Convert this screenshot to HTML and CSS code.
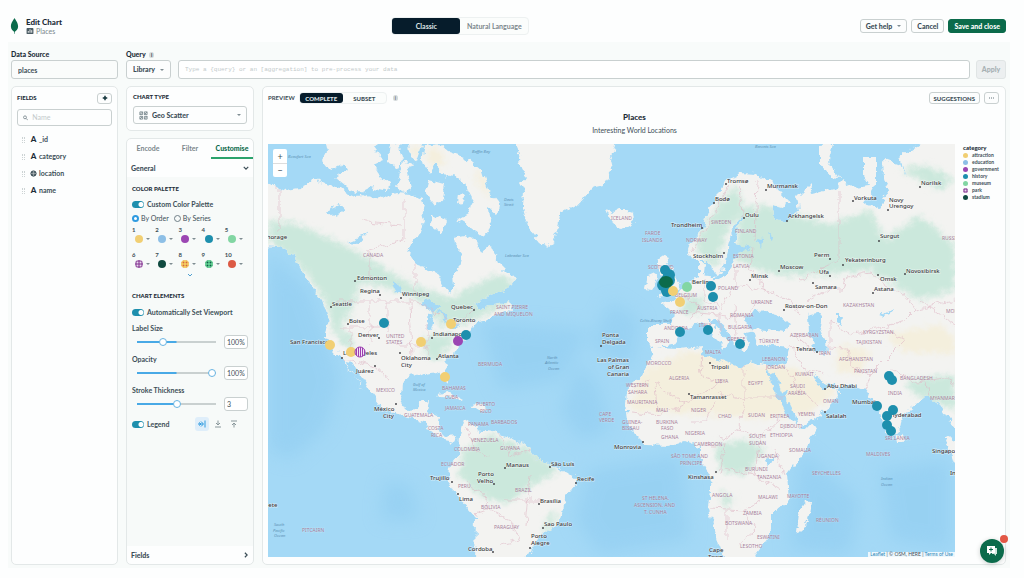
FILE: index.html
```html
<!DOCTYPE html>
<html lang="en">
<head>
  <meta charset="UTF-8">
  <meta name="viewport" content="width=device-width, initial-scale=1.0">
  <title>Edit Chart - Places</title>
  <link rel="stylesheet" href="styles.css">
</head>
<body>
  <header class="topbar">
    <div class="brand">
      <svg class="leaf" viewBox="0 0 10 18"><path d="M5 0C6 2 9 5 9 9.500C9 13 6.500 14.500 5.400 15.500L5.200 18H4.800L4.600 15.500C3.500 14.500 1 13 1 9.500C1 5 4 2 5 0Z" fill="#0b6b4b"/></svg>
      <div>
        <h1>Edit Chart</h1>
        <p class="crumb"><svg viewBox="0 0 8 7"><rect width="8" height="7" rx="1" fill="#4c5d65"/><path d="M2 5.500V3.500M4 5.500V1.500M6 5.500V2.500" stroke="#fff"/></svg>Places</p>
      </div>
    </div>
    <div class="segmented mode">
      <button class="active">Classic</button>
      <button>Natural Language</button>
    </div>
    <div class="actions">
      <button class="btn">Get help <span class="caret"></span></button>
      <button class="btn">Cancel</button>
      <button class="btn primary">Save and close</button>
    </div>
  </header>

  <main class="workspace">
    <!-- Query bar -->
    <div class="query-row">
      <div class="field">
        <label for="source">Data Source</label>
        <input id="source" type="text" value="places">
      </div>
      <div class="field query">
        <label for="query">Query <span class="info">i</span></label>
        <div class="query-controls">
          <button class="btn library">Library <span class="caret"></span></button>
          <input id="query" class="mono" type="text" placeholder="Type a {query} or an [aggregation] to pre-process your data">
          <button class="btn apply" disabled>Apply</button>
        </div>
      </div>
    </div>

    <div class="panels">
      <!-- Fields -->
      <section class="card fields">
        <div class="card-head">
          <h2>FIELDS</h2>
          <button class="add" aria-label="Add field"><svg viewBox="0 0 8 8"><path d="M4 1V7M1 4H7" stroke="#12333a" stroke-width="2"/></svg></button>
        </div>
        <div class="search">
          <svg viewBox="0 0 8 8"><circle cx="3" cy="3" r="2.200" fill="none" stroke="#5c6c75"/><path d="M4.700 4.700L7.500 7.500" stroke="#5c6c75"/></svg>
          <input type="text" placeholder="Name" aria-label="Field name">
        </div>
        <ul class="field-list">
          <li><i class="grip"></i><b>A</b>_id</li>
          <li><i class="grip"></i><b>A</b>category</li>
          <li><i class="grip"></i><svg viewBox="0 0 8 8"><circle cx="4" cy="4" r="3" fill="#5c6c75" stroke="#2c4149"/><path d="M1 4H7M4 1V7" stroke="#c1c7c6" stroke-width=".6"/></svg>location</li>
          <li><i class="grip"></i><b>A</b>name</li>
        </ul>
      </section>

      <div class="settings">
        <section class="card chart-type">
          <label for="type"><h2>CHART TYPE</h2></label>
          <div class="select">
            <svg viewBox="0 0 10 10"><path d="M1 1H4V4H1ZM6 1H9V4H6ZM1 6H4V9H1ZM6 6H9V9H6ZM1 4L4 1M6 4L9 1M1 9L4 6M6 9L9 6" fill="none" stroke="#7b8a90"/></svg>
            <select id="type"><option>Geo Scatter</option></select>
            <span class="caret"></span>
          </div>
        </section>

        <section class="card customize">
          <nav class="tabs">
            <button>Encode</button>
            <button>Filter</button>
            <button class="active">Customise</button>
          </nav>
          <button class="accordion">General <svg viewBox="0 0 8 8"><path d="M1 2.500L4 5.500L7 2.500" fill="none" stroke="#3d4f58" stroke-width="1.600"/></svg></button>
          <div class="options">
            <h2>COLOR PALETTE</h2>
            <label class="toggle"><input type="checkbox" checked>Custom Color Palette</label>
            <div class="radios">
              <label><input type="radio" name="by" checked>By Order</label>
              <label><input type="radio" name="by">By Series</label>
            </div>
            <div class="palette">
              <button>1<span><i class="yellow"></i><em class="caret"></em></span></button>
              <button>2<span><i class="blue"></i><em class="caret"></em></span></button>
              <button>3<span><i class="purple"></i><em class="caret"></em></span></button>
              <button>4<span><i class="teal"></i><em class="caret"></em></span></button>
              <button>5<span><i class="mint"></i><em class="caret"></em></span></button>
              <button>6<span><i class="dots-purple"></i><em class="caret"></em></span></button>
              <button>7<span><i class="forest"></i><em class="caret"></em></span></button>
              <button>8<span><i class="dots-yellow"></i><em class="caret"></em></span></button>
              <button>9<span><i class="dots-green"></i><em class="caret"></em></span></button>
              <button>10<span><i class="red"></i><em class="caret"></em></span></button>
            </div>
            <button class="more" aria-label="More colors"><svg viewBox="0 0 6 4"><path d="M1 1L3 3L5 1" fill="none" stroke="#4f9fd0"/></svg></button>

            <h2>CHART ELEMENTS</h2>
            <label class="toggle viewport"><input type="checkbox" checked>Automatically Set Viewport</label>
            <div class="range">
              <label for="size">Label Size</label>
              <input id="size" class="third" type="range" value="31">
              <input type="text" value="100%" aria-label="Label size value">
            </div>
            <div class="range">
              <label for="opacity">Opacity</label>
              <input id="opacity" class="full" type="range" value="100">
              <input type="text" value="100%" aria-label="Opacity value">
            </div>
            <div class="range">
              <label for="stroke">Stroke Thickness</label>
              <input id="stroke" class="half" type="range" value="50">
              <input type="text" value="3" aria-label="Stroke value">
            </div>
            <div class="legend-row">
              <label class="toggle"><input type="checkbox" checked>Legend</label>
              <button class="active" aria-label="Right"><svg viewBox="0 0 8 8"><path d="M0 4H5M3 1.500L5.500 4L3 6.500M7 0.500V7.500M1 2.500L3 4L1 5.500" fill="none" stroke="#2f9be0"/></svg></button>
              <button aria-label="Bottom"><svg viewBox="0 0 8 8"><path d="M4 0.500V5M2 3L4 5L6 3M1 7H7" fill="none" stroke="#89979b"/></svg></button>
              <button aria-label="Top"><svg viewBox="0 0 8 8"><path d="M4 7.500V3M2 5L4 3L6 5M1 1H7" fill="none" stroke="#89979b"/></svg></button>
            </div>
          </div>
          <button class="accordion">Fields <svg viewBox="0 0 8 8"><path d="M2.500 1L5.500 4L2.500 7" fill="none" stroke="#3d4f58" stroke-width="1.600"/></svg></button>
        </section>
      </div>

      <!-- Chart preview -->
      <section class="card preview">
        <div class="preview-head">
          <h2>PREVIEW</h2>
          <div class="segmented">
            <button class="active">COMPLETE</button>
            <button>SUBSET</button>
          </div>
          <span class="info">i</span>
          <button class="btn suggestions">SUGGESTIONS</button>
          <button class="btn dots" aria-label="More"><svg viewBox="0 0 8 2"><path d="M1 1h0M4 1h0M7 1h0" stroke="#3d4f58" stroke-width="1.600" stroke-linecap="round"/></svg></button>
        </div>
        <h3>Places</h3>
        <p class="subtitle">Interesting World Locations</p>
        <div class="chart">
          <div class="map">
            <svg viewBox="268 144 687 413" preserveAspectRatio="xMidYMid slice">
              <defs>
                <filter id="coast" x="0" y="0" width="1" height="1">
                  <feTurbulence type="fractalNoise" baseFrequency="0.13" numOctaves="3" seed="4"/>
                  <feDisplacementMap in="SourceGraphic" scale="9" xChannelSelector="R" yChannelSelector="G"/>
                </filter>
                <filter id="soft"><feGaussianBlur stdDeviation="3"/></filter>
                <filter id="deep-soft"><feGaussianBlur stdDeviation="9"/></filter>
                <pattern id="stripes" x="354" width="2" height="4" patternUnits="userSpaceOnUse"><rect width="2" height="4" fill="#f3e2f6"/><rect width="1" height="4" fill="#9b3fb0"/></pattern>
                <clipPath id="land">
                  <path id="namerica" d="M258 182L268 183L284 189L300 187L315 180L325 185L340 188L345 192L358 198L366 194L380 198L395 193L410 194L422 199L426 210L420 215L424 222L420 232L411 243L409 254L416 265L430 270L440 276L446 287L450 292L454 286L453 274L460 266L463 255L455 245L454 236L464 234L475 240L482 252L491 246L498 262L508 272L515 277L512 286L496 294L482 299L475 304L480 310L492 305L507 303L512 309L502 313L488 320L478 322L470 334L461 343L455 352L444 362L450 380L448 384L443 375L438 371L428 372L420 374L411 376L402 384L401 400L407 411L418 410L423 401L429 399L427 411L440 417L438 428L447 437L458 436L455 442L444 440L431 432L424 422L410 417L394 413L381 406L372 394L363 380L352 363L346 362L354 376L366 391L361 386L345 363L334 351L325 337L328 317L322 300L309 284L303 272L294 256L280 247L258 246Z"/>
                  <path id="arctic" d="M324 140L380 140L374 148L383 160L374 164L381 176L391 185L383 191L370 188L358 194L346 186L336 178L348 170L344 163L330 170L322 161L327 152ZM390 143L398 141L403 160L398 168L388 162ZM404 160L412 163L407 170L412 188L403 193L397 184ZM409 140L423 143L417 162L410 157ZM424 146L440 144L449 152L466 158L482 171L488 190L500 205L498 214L488 207L490 225L483 236L470 226L458 219L468 213L472 198L463 181L454 174L447 177L436 165L430 174L421 160ZM430 180L445 184L443 199L434 205L426 194ZM458 195L465 196L462 204L457 202ZM432 215L447 221L441 233L431 225Z"/>
                  <path id="greenland" d="M516 140L522 168L526 176L520 184L524 191L523 208L528 228L540 242L550 248L558 228L560 214L577 205L590 190L603 187L612 173L609 160L614 150L616 140Z"/>
                  <path id="iceland" d="M606 209L612 213L618 210L625 210L634 213L635 220L629 225L619 228L611 221Z"/>
                  <path id="britain" d="M658 260L664 256L669 258L665 264L673 268L674 277L679 284L678 291L668 295L658 297L664 290L658 286L663 277L658 271ZM648 277L655 274L658 282L652 290L645 289Z"/>
                  <path id="samerica" d="M464 419L474 425L478 430L498 433L510 438L523 444L530 450L538 460L556 466L577 478L577 483L566 496L564 513L555 526L545 532L534 545L526 560L475 560L476 518L460 500L448 480L449 467L459 454L460 434Z"/>
                  <path id="islands" d="M437 394L448 392L463 400L462 402L452 398L439 397ZM470 405L481 404L488 408L478 410ZM490 305L511 301L513 312L500 310ZM807 501L811 503L808 520L802 533L796 531L798 514ZM897 436L902 433L903 442L898 442ZM820 144L833 143L829 161L839 178L832 177L820 163ZM945 436L956 441L962 470L954 463ZM698 318L702 319L702 332L697 331Z"/>
                  <path id="eurasia" d="M653 347L648 344L648 325L672 325L674 313L661 304L674 301L680 290L690 284L699 276L699 262L704 262L703 275L717 277L708 261L693 261L687 254L691 242L704 227L711 206L726 181L742 173L756 174L775 185L788 200L785 208L771 204L776 220L784 222L800 211L798 197L810 185L812 194L835 188L842 181L853 188L870 186L864 176L864 157L876 157L876 185L865 204L877 208L889 194L884 178L883 158L900 164L907 178L899 158L925 140L965 140L965 434L951 424L941 407L935 399L925 397L915 405L902 415L900 430L893 438L886 430L880 409L866 390L855 386L837 386L839 395L820 416L799 428L812 427L817 429L804 452L786 475L788 500L773 514L773 530L760 548L751 560L724 560L715 530L708 505L712 478L700 462L700 447L685 441L668 446L646 445L629 428L626 405L627 388L642 375L652 356Z"/>
                </clipPath>
              </defs>
              <rect class="sea" x="258" y="134" width="710" height="435"/>
              <!-- Deeper water -->
              <g class="deep" filter="url(#deep-soft)">
                <path d="M268 250L310 290L340 380L325 430L290 460L268 450ZM610 300L640 320L630 370L590 345ZM480 320L590 330L560 380L500 390ZM580 360L600 390L610 430L580 440L560 410ZM590 470L680 455L690 540L600 555L575 520ZM800 450L860 500L850 555L790 550ZM385 480L410 485L420 520L380 520ZM880 470L950 460L950 550L890 540Z"/>
              </g>
              <g filter="url(#coast)">
                <g class="land">
                  <use href="#namerica"/><use href="#arctic"/><use href="#greenland"/><use href="#iceland"/>
                  <use href="#britain"/><use href="#samerica"/><use href="#islands"/><use href="#eurasia"/>
                </g>
                <g clip-path="url(#land)">
                  <g class="forest-area" filter="url(#soft)">
                    <path d="M268 220L300 225L350 248L385 268L412 285L450 298L495 275L512 280L512 300L470 322L440 325L430 305L395 290L360 282L352 310L335 335L325 300L300 265L268 240ZM425 335L455 335L440 360L425 357ZM334 325L350 335L355 350L342 345Z"/>
                    <path d="M463 450L490 435L525 447L560 470L530 487L505 505L480 495L458 475ZM545 520L560 510L545 540ZM695 245L715 210L735 185L745 205L725 235L718 265L705 262ZM740 210L765 205L830 225L870 210L885 240L920 215L955 245L955 290L920 300L870 270L820 275L775 275L735 260ZM715 445L750 440L765 450L745 475L720 470ZM905 380L955 375L955 410L915 395ZM680 300L700 295L705 310L685 315ZM720 490L735 500L725 510ZM900 170L925 165L955 180L940 190Z"/>
                  </g>
                  <g class="desert" filter="url(#soft)">
                    <path d="M640 372L690 350L760 365L790 368L808 412L760 418L630 410ZM780 362L810 375L838 392L802 418ZM840 345L870 350L860 375L835 370ZM885 335L940 325L955 338L955 355L905 352Z"/>
                    <path d="M409 146L423 146L416 160ZM425 150L440 148L445 165L432 170ZM475 168L485 178L492 200L478 185Z"/>
                  </g>
                  <!-- Enclosed seas and lakes -->
                  <g class="sea">
                    <path d="M657 348L672 345L677 338L684 329L693 326L703 322L714 338L724 348L728 341L718 330L709 319L716 318L728 331L735 344L745 352L749 343L744 332L752 330L757 344L772 346L790 348L788 364L776 367L757 362L738 367L719 359L701 355L702 346L680 349Z"/>
                    <path d="M746 315L755 312L770 311L790 324L784 332L768 330L747 329ZM808 315L821 312L819 326L825 340L826 354L814 350L809 332ZM767 370L775 374L792 408L797 427L786 414L773 389ZM813 374L822 382L834 384L835 389L820 389Z"/>
                    <path d="M714 280L723 268L725 256L730 238L738 220L742 214L737 231L734 243L752 247L736 255L730 270L720 280Z"/>
                    <path d="M325 210L340 204L345 210L334 218ZM347 242L362 236L368 232L359 243ZM420 303L430 300L442 307L433 312ZM429 314L435 312L431 330L427 328ZM438 310L449 315L447 325ZM447 328L460 323L452 329ZM392 282L400 285L403 295L396 290ZM837 314L843 314L842 325L837 322ZM765 460L772 457L768 467ZM878 316L895 309L894 312L881 317ZM757 238L763 239L761 247ZM768 232L773 236L772 242Z"/>
                  </g>
                  <g class="borders">
                    <path d="M279 180V230M333 301H416L430 308L455 325L475 308M336 361L352 360L372 365L390 380M388 301V330M410 301L412 360M370 302V345M340 327H385M350 327V350M395 345H430M427 325V362M404 200V240L370 250V280M415 260V295M360 220L400 225"/>
                    <path d="M468 430L475 450L490 458M500 434L510 455L530 450M465 480L485 495L490 510L475 515M490 510L510 520L520 540L500 545M505 500L545 500M530 475L525 525M650 380L630 390M655 383L685 404L720 383L700 375L702 355M744 365V400L716 392M685 404L660 415L630 412M655 385L657 410M690 422L705 422L715 400M744 400L738 430L720 440M744 397H785M738 430L760 438L780 420M760 438L755 475L725 468M705 445H725L720 475M710 508L745 510L760 500M727 510V540M745 510L755 530L738 545M775 450L785 475M755 475L780 490M673 325L690 330M681 296L700 305L690 320M703 279V300L720 305M735 268L735 285L720 308M735 285L765 290L790 300L800 315M752 247L750 270L770 295M690 253L705 230L730 185M740 185L742 215M757 180L755 240M690 312L745 318L758 300M720 312V335M735 305L737 335"/>
                    <path d="M808 300L828 290L843 290L846 278L870 273L885 285L905 295L915 310L905 320L880 328L850 335L830 320L830 345M915 310L955 300M880 328L905 340L870 375L850 365L848 348L826 347M795 335L815 352M790 345L805 370L825 375M870 375L865 390M890 370L915 382L945 378L955 385M785 365L800 390L820 408M925 380L930 400M920 300L955 325M839 190V260L800 280"/>
                  </g>
                </g>
              </g>

              <g class="countries">
                <text x="363" y="257">CANADA</text><text x="386" y="338">UNITED</text><text x="386" y="344">STATES</text>
                <text x="376" y="392">MEXICO</text><text x="404" y="417">GUATEMALA</text><text x="428" y="430">COSTA</text><text x="431" y="437">RICA</text>
                <text x="442" y="390">BAHAMAS</text><text x="445" y="399">CUBA</text><text x="445" y="410">JAMAICA</text><text x="476" y="406">PUERTO</text><text x="480" y="413">RICO</text>
                <text x="468" y="426">PANAMA</text><text x="491" y="424">BARBADOS</text><text x="471" y="442">VENEZUELA</text><text x="454" y="451">COLOMBIA</text><text x="500" y="450">GUYANA</text><text x="441" y="466">ECUADOR</text>
                <text x="458" y="488">PERU</text><text x="481" y="509">BOLIVIA</text><text x="494" y="529">PARAGUAY</text><text x="515" y="492">BRAZIL</text><text x="302" y="532">PITCAIRN</text>
                <text x="478" y="366">BERMUDA</text><text x="496" y="309">SAINT PIERRE</text><text x="494" y="316">AND MIQUELON</text>
                <text x="611" y="220">ICELAND</text><text x="645" y="235">FAROE</text><text x="642" y="242">ISLANDS</text><text x="648" y="269">SCOTLAND</text>
                <text x="711" y="224">SWEDEN</text><text x="686" y="242">NORWAY</text><text x="735" y="233">FINLAND</text><text x="733" y="258">ESTONIA</text><text x="733" y="268">LATVIA</text><text x="718" y="290">POLAND</text>
                <text x="675" y="297">BELGIUM</text><text x="670" y="314">FRANCE</text><text x="697" y="310">AUSTRIA</text><text x="730" y="317">ROMANIA</text><text x="728" y="329">BULGARIA</text><text x="664" y="330">ANDORRA</text><text x="655" y="343">SPAIN</text><text x="699" y="327">ITALY</text><text x="727" y="341">GREECE</text>
                <text x="751" y="304">UKRAINE</text><text x="759" y="343">TÜRKIYE</text><text x="790" y="337">AZERBAIJAN</text><text x="843" y="307">KAZAKHSTAN</text><text x="863" y="334">KYRGYZSTAN</text><text x="856" y="344">TAJIKISTAN</text><text x="942" y="240">RUSSIA</text><text x="946" y="313">MONGOLIA</text>
                <text x="705" y="354">MALTA</text><text x="646" y="365">MOROCCO</text><text x="669" y="380">ALGERIA</text><text x="715" y="383">LIBYA</text><text x="748" y="385">EGYPT</text><text x="626" y="387">WESTERN</text><text x="628" y="394">SAHARA</text><text x="627" y="404">MAURITANIA</text><text x="656" y="412">MALI</text><text x="691" y="412">NIGER</text><text x="718" y="418">CHAD</text><text x="748" y="417">SUDAN</text>
                <text x="599" y="416">CAPE</text><text x="599" y="422">VERDE</text><text x="622" y="424">GUINEA-</text><text x="622" y="430">BISSAU</text><text x="656" y="424">BURKINA</text><text x="661" y="430">FASO</text><text x="661" y="439">GHANA</text><text x="685" y="435">NIGERIA</text><text x="694" y="446">CAMEROON</text><text x="749" y="438">SOUTH</text><text x="749" y="445">SUDAN</text>
                <text x="671" y="458">SÃO TOMÉ AND</text><text x="680" y="465">PRÍNCIPE</text><text x="712" y="497">ANGOLA</text><text x="725" y="525">BOTSWANA</text><text x="740" y="548">LESOTHO</text><text x="743" y="515">ZAMBIA</text><text x="745" y="471">BURUNDI</text>
                <text x="642" y="500">ST HELENA,</text><text x="634" y="507">ASCENSION, AND</text><text x="644" y="514">T. CUNHA</text>
                <text x="762" y="361">LEBANON</text><text x="766" y="369">JORDAN</text><text x="819" y="355">IRAN</text><text x="839" y="361">AFGHANISTAN</text><text x="854" y="373">PAKISTAN</text><text x="795" y="376">KUWAIT</text><text x="790" y="388">SAUDI</text><text x="788" y="395">ARABIA</text><text x="823" y="403">OMAN</text><text x="798" y="416">YEMEN</text><text x="770" y="418">ERITREA</text><text x="780" y="428">DJIBOUTI</text><text x="770" y="437">ETHIOPIA</text><text x="789" y="452">SOMALIA</text><text x="757" y="458">UGANDA</text><text x="757" y="479">TANZANIA</text><text x="758" y="499">MALAWI</text><text x="787" y="498">MAYOTTE</text><text x="757" y="539">ESWATINI</text>
                <text x="900" y="380">BANGLADESH</text><text x="888" y="395">INDIA</text><text x="930" y="400">MYANMAR</text><text x="885" y="440">SRI LANKA</text><text x="866" y="456">MALDIVES</text><text x="812" y="475">SEYCHELLES</text><text x="816" y="522">RÉUNION</text>
              </g>
              <g class="waters">
                <text x="472" y="153">Baffin Bay</text><text x="288" y="158">Beaufort Sea</text><text x="504" y="201">Davis</text><text x="504" y="206">Strait</text><text x="505" y="257">Labrador Sea</text><text x="755" y="148">Barents Sea</text><text x="640" y="322">Celtic-Biscay Shelf</text>
                <text x="413" y="386">Gulf of</text><text x="413" y="391">Mexico</text><text x="547" y="359">North</text><text x="545" y="364">Atlantic</text><text x="548" y="370">Ocean</text><text x="274" y="526">South</text><text x="273" y="532">Pacific</text><text x="274" y="537">Ocean</text><text x="881" y="480">Indian</text><text x="881" y="486">Ocean</text>
              </g>
              <g class="cities">
                <text x="256" y="239">Anchorage</text><text x="357" y="280">Edmonton</text><text x="360" y="293">Regina</text><text x="402" y="296">Winnipeg</text><text x="332" y="306">Seattle</text><text x="349" y="323">Boise</text><text x="358" y="337">Denver</text><text x="290" y="344">San Francisco</text><text x="451" y="309">Quebec</text><text x="453" y="322">Toronto</text><text x="433" y="336">Indianapolis</text><text x="343" y="355">Los Angeles</text>
                <text x="401" y="360">Oklahoma</text><text x="401" y="367">City</text><text x="438" y="358">Atlanta</text><text x="356" y="373">Juárez</text><text x="374" y="411">México</text><text x="383" y="418">City</text><text x="430" y="480">Trujillo</text><text x="459" y="501">Lima</text><text x="478" y="476">Porto</text><text x="477" y="483">Velho</text><text x="506" y="467">Manaus</text><text x="551" y="466">São Luís</text><text x="577" y="481">Recife</text><text x="540" y="503">Brasília</text><text x="544" y="526">Sao Paulo</text><text x="531" y="538">Porto</text><text x="531" y="545">Alegre</text><text x="468" y="551">Cordoba</text><text x="254" y="507">Papeete</text>
                <text x="602" y="337">Ponta</text><text x="602" y="344">Delgada</text><text x="597" y="362">Las Palmas</text><text x="608" y="369">of Gran</text><text x="607" y="376">Canaria</text><text x="671" y="227">Trondheim</text><text x="693" y="258">Stockholm</text><text x="727" y="183">Tromsø</text><text x="715" y="201">Bodø</text><text x="745" y="217">Oulu</text><text x="692" y="284">Berlin</text><text x="751" y="278">Minsk</text><text x="780" y="269">Moscow</text><text x="767" y="188">Murmansk</text><text x="788" y="218">Arkhangelsk</text><text x="854" y="200">Vorkuta</text><text x="889" y="202">Novy</text><text x="889" y="208">Urengoy</text><text x="921" y="185">Norilsk</text><text x="880" y="238">Surgut</text><text x="814" y="257">Perm</text><text x="845" y="262">Yekaterinburg</text><text x="819" y="274">Ufa</text><text x="815" y="289">Samara</text><text x="880" y="281">Omsk</text><text x="906" y="273">Novosibirsk</text><text x="874" y="291">Astana</text><text x="785" y="308">Rostov-on-Don</text><text x="796" y="351">Tehran</text>
                <text x="711" y="369">Tripoli</text><text x="690" y="399">Tamanrasset</text><text x="614" y="449">Monrovia</text><text x="688" y="479">Kinshasa</text><text x="709" y="552">Cape</text><text x="708" y="559">Town</text><text x="827" y="388">Abu Dhabi</text><text x="826" y="418">Salalah</text><text x="852" y="404">Mumbai</text><text x="890" y="417">Hyderabad</text><text x="932" y="453">Singapore</text><text x="950" y="475">Indonesia</text>
              </g>
              <path class="city-dots" d="M355 281h0M380 295h0M401 298h0M331 307h0M348 324h0M379 338h0M432 338h0M474 310h0M400 353h0M437 359h0M342 358h0M375 366h0M396 404h0M452 482h0M458 494h0M505 468h0M550 467h0M576 483h0M539 504h0M543 528h0M530 548h0M493 552h0M494 484h0M601 346h0M702 228h0M724 253h0M726 184h0M714 203h0M744 218h0M750 280h0M779 271h0M766 190h0M787 221h0M853 201h0M888 210h0M920 187h0M879 241h0M830 259h0M843 265h0M830 276h0M813 283h0M878 275h0M905 274h0M873 293h0M784 310h0M817 352h0M710 363h0M689 394h0M643 442h0M716 472h0M825 389h0M825 412h0"/>

              <!-- Data points -->
              <g class="points">
                <g class="history">
                  <circle cx="384" cy="323" r="5"/><circle cx="466" cy="335" r="5"/><circle cx="665" cy="270" r="5"/><circle cx="669" cy="275" r="6"/><circle cx="668" cy="280" r="7"/><circle cx="663" cy="285" r="6"/><circle cx="667" cy="291" r="6"/><circle cx="711" cy="286" r="5"/><circle cx="713" cy="297" r="5"/><circle cx="680" cy="332" r="5"/><circle cx="708" cy="330" r="5"/><circle cx="740" cy="344" r="5"/><circle cx="889" cy="376" r="5"/><circle cx="892" cy="380" r="5"/><circle cx="877" cy="406" r="5"/><circle cx="893" cy="410" r="5"/><circle cx="887" cy="416" r="5"/><circle cx="887" cy="425" r="5"/><circle cx="891" cy="431" r="5"/>
                </g>
                <g class="attraction">
                  <circle cx="330" cy="345" r="5"/><circle cx="351" cy="352" r="5"/><circle cx="421" cy="342" r="5"/><circle cx="451" cy="324" r="5"/><circle cx="445" cy="377" r="5"/><circle cx="673" cy="291" r="5"/><circle cx="680" cy="302" r="5"/>
                </g>
                <circle class="government" cx="458" cy="341" r="5"/>
                <circle class="park" cx="360" cy="352" r="5" fill="url(#stripes)"/>
                <circle class="museum" cx="687" cy="287" r="5"/>
                <ellipse class="stadium" cx="666" cy="282" rx="7" ry="6"/>
              </g>
            </svg>
            <div class="zoom">
              <button aria-label="Zoom in">+</button>
              <button aria-label="Zoom out">−</button>
            </div>
            <p class="credit"><a href="#">Leaflet</a> | © OSM, HERE | <a href="#">Terms of Use</a></p>
          </div>
          <div class="legend">
            <b>category</b>
            <ul>
              <li><i class="yellow"></i>attraction</li>
              <li><i class="blue"></i>education</li>
              <li><i class="purple"></i>government</li>
              <li><i class="teal"></i>history</li>
              <li><i class="mint"></i>museum</li>
              <li><i class="dots-purple"></i>park</li>
              <li><i class="forest"></i>stadium</li>
            </ul>
          </div>
        </div>
      </section>
    </div>
  </main>

  <button class="chat" aria-label="Chat">
    <svg viewBox="0 0 12 12"><path d="M1 1H9V8H5L3 10V8H1Z" fill="#fff"/><path d="M9 3H11V9H10V11L8 9H6V8H9Z" fill="#cfe5dc"/><path d="M3 4.500H7M5 2.500V6.500" stroke="#0b6b4b"/></svg>
    <span class="badge"></span>
  </button>
</body>
</html>
```
FILE: styles.css
```css
:root {
  --ink: #1c2d38;
  --text: #3d4f58;
  --muted: #7b878c;
  --line: #e3e8e8;
  --input-line: #c9d0d0;
  --bg: #f8fbfa;
  --green: #0b6b4b;
  --teal: #1e8fad;
  --navy: #061c2b;
}

* {
  margin: 0;
  padding: 0;
  box-sizing: border-box;
}

body {
  min-height: 100vh;
  display: flex;
  flex-direction: column;
  font-family: Lato, "Noto Sans", sans-serif;
  font-size: 7px;
  line-height: 9px;
  color: var(--text);
  background: #fdfefe;
}

button,
input,
select {
  font: inherit;
  color: inherit;
  min-width: 0;
}

button {
  background: none;
  border: none;
  white-space: nowrap;
}

svg {
  display: block;
}

ul {
  list-style: none;
}

h1 {
  font-size: 8px;
  line-height: 10px;
  font-weight: 900;
  color: var(--ink);
}

h2 {
  font-size: 6px;
  line-height: 8px;
  font-weight: 900;
  color: var(--ink);
}

/* Top bar */
.topbar {
  display: grid;
  grid-template-columns: 4fr auto 5fr;
  align-items: center;
  height: 42px;
  padding: 10px 18px 0 10px;
}

.brand {
  display: flex;
  align-items: center;
  gap: 7px;
}

.leaf {
  width: 9px;
  height: 18px;
}

.crumb {
  display: flex;
  align-items: center;
  gap: 2px;
  color: var(--muted);
}

.crumb svg {
  width: 8px;
  height: 6px;
}

.segmented {
  display: flex;
  border: 1px solid #edf1f1;
  border-radius: 4px;
  background: #fbfdfc;
}

.segmented button {
  border-radius: 3px;
}

.segmented .active {
  background: var(--navy);
  color: #dfe6e8;
}

.mode {
  font-weight: 700;
  color: var(--muted);
}

.mode button {
  width: 68px;
  height: 16px;
}

.actions {
  display: flex;
  justify-content: flex-end;
  gap: 4px;
}

.btn {
  display: inline-flex;
  align-items: center;
  justify-content: center;
  gap: 5px;
  height: 14px;
  padding: 0 5px;
  border: 1px solid var(--input-line);
  border-radius: 3px;
  background: #fcfdfd;
  color: var(--text);
  font-weight: 900;
}

.primary {
  background: var(--green);
  border-color: var(--green);
  color: #fff;
}

.caret {
  display: inline-block;
  border: 2px solid transparent;
  border-top-color: #7f8c92;
  border-bottom: 0;
}

/* Workspace */
.workspace {
  flex: 1;
  display: flex;
  flex-direction: column;
  gap: 7px;
  margin: 0 14px 10px 8px;
  padding: 8px 4px 3px 3px;
  background: var(--bg);
}

.query-row {
  display: grid;
  grid-template-columns: 107px 1fr;
  gap: 8px;
}

.field label {
  display: block;
  height: 10px;
  font-weight: 900;
  color: var(--ink);
}

.field input {
  height: 19px;
  padding: 0 6px;
  border: 1px solid var(--input-line);
  border-radius: 3px;
  background: #fff;
}

#source {
  width: 100%;
  background: #fafcfb;
  font-weight: 700;
}

.query-controls {
  display: flex;
  gap: 6px;
}

.query-controls .btn {
  height: 19px;
}

.query-controls .library {
  width: 45px;
  margin-right: 1px;
}

.query-controls input {
  flex: 1;
}

.field .mono {
  font-family: "Liberation Mono", monospace;
  font-size: 6px;
}

::placeholder {
  color: #c3cacb;
  opacity: 1;
}

.query-controls .apply {
  width: 30px;
  background: #eceff0;
  border-color: #e0e5e5;
  color: #a6b0b3;
}

.info {
  display: inline-block;
  width: 5px;
  margin-left: 2px;
  border-radius: 3px;
  background: #d3d9da;
  color: var(--text);
  font-size: 5px;
  line-height: 6px;
  text-align: center;
}

.panels {
  flex: 1;
  display: grid;
  grid-template-columns: 107px 128px 1fr;
  gap: 8px;
}

.card {
  border: 1px solid var(--line);
  border-radius: 5px;
  background: #fdfefe;
}

/* Fields panel */
.fields {
  padding: 5px;
}

.card-head {
  display: flex;
  align-items: center;
  justify-content: space-between;
  height: 12px;
}

.add {
  display: grid;
  place-items: center;
  width: 15px;
  height: 11px;
  border: 1px solid var(--input-line);
  border-radius: 3px;
}

.add svg {
  width: 6px;
  height: 6px;
}

.search {
  display: flex;
  align-items: center;
  gap: 4px;
  height: 17px;
  margin-top: 5px;
  padding: 0 5px;
  border: 1px solid var(--input-line);
  border-radius: 3px;
}

.search svg {
  width: 6px;
  height: 6px;
}

.search input {
  width: 100%;
  border: none;
  background: none;
}

.field-list {
  padding: 5px;
}

.field-list li {
  display: flex;
  align-items: center;
  gap: 2px;
  height: 17px;
  font-weight: 700;
}

.field-list b {
  width: 7px;
  font-size: 8px;
  font-weight: 900;
  text-align: center;
  color: var(--ink);
}

.field-list svg {
  width: 7px;
  height: 7px;
}

.grip {
  width: 3px;
  height: 6px;
  margin-right: 3px;
  border: dotted #ccd3d4;
  border-width: 0 1px;
}

/* Settings column */
.settings {
  display: flex;
  flex-direction: column;
  gap: 7px;
}

.chart-type {
  height: 45px;
  padding: 6px;
}

.select {
  position: relative;
  display: flex;
  align-items: center;
  gap: 4px;
  height: 18px;
  margin-top: 5px;
  padding: 0 5px;
  border: 1px solid var(--input-line);
  border-radius: 3px;
}

.select svg {
  width: 9px;
  height: 9px;
}

.select select {
  flex: 1;
  appearance: none;
  border: none;
  background: none;
  font-size: 7px;
  font-weight: 900;
}

.customize {
  flex: 1;
  display: flex;
  flex-direction: column;
  overflow: hidden;
}

.tabs {
  display: grid;
  grid-template-columns: repeat(3, 1fr);
  height: 20px;
}

.tabs button {
  border-bottom: 2px solid transparent;
  font-weight: 700;
  color: var(--muted);
}

.tabs .active {
  border-color: #2ba36c;
  color: var(--green);
  font-weight: 900;
}

.accordion {
  display: flex;
  align-items: center;
  justify-content: space-between;
  height: 18px;
  padding: 0 4px;
  font-weight: 900;
}

.accordion svg {
  width: 6px;
  height: 6px;
}

.options {
  flex: 1;
  padding: 8px 5px;
  background: #f7faf9;
}

.toggle {
  display: flex;
  align-items: center;
  gap: 3px;
  margin-top: 7px;
  font-weight: 700;
}

.toggle input {
  appearance: none;
  width: 12px;
  height: 7px;
  border-radius: 4px;
  background: radial-gradient(circle at 9px 50%, #fff 2px, var(--teal) 3px);
}

.radios {
  display: flex;
  gap: 5px;
  margin: 5px 0 3px;
}

.radios label {
  display: flex;
  align-items: center;
  gap: 2px;
}

.radios input {
  appearance: none;
  width: 7px;
  height: 7px;
  border: 1px solid #6f7f87;
  border-radius: 50%;
}

.radios input:checked {
  border: 2px solid #2f9be0;
  background: #fff;
}

.palette {
  display: grid;
  grid-template-columns: repeat(5, 1fr);
  gap: 8px 0;
}

.palette button {
  font-size: 6px;
  line-height: 8px;
  font-weight: 700;
  text-align: left;
}

.palette span {
  display: flex;
  align-items: center;
  gap: 3px;
  padding: 1px 0 0 3px;
}

.palette i {
  width: 8px;
  height: 8px;
  border-radius: 50%;
}

.yellow { background: #f1cf73; }
.blue { background: #8dbfe6; }
.purple { background: #9b46b3; }
.teal { background: var(--teal); }
.mint { background: #82d6a3; }
.forest { background: #104a40; }
.red { background: #dc5a45; }
.dots-purple { background: radial-gradient(#e9d8ee 20%, #9a5ba6 60%) 1px 1px / 3px 3px; }
.dots-yellow { background: radial-gradient(#d8653e 20%, #f3cb62 60%) 1px 1px / 3px 3px; }
.dots-green { background: radial-gradient(#125949 20%, #60cf91 60%) 1px 1px / 3px 3px; }

.more {
  display: block;
  margin: 5px auto 15px;
}

.more svg {
  width: 6px;
  height: 4px;
}

.viewport {
  margin: 8px 0 7px;
}

.range {
  display: grid;
  grid-template-columns: 1fr 24px;
  align-items: center;
  column-gap: 8px;
  margin-bottom: 5px;
  padding-left: 5px;
}

.range label {
  grid-column: 1 / -1;
  margin-left: -5px;
  font-weight: 700;
}

.range input[type="text"] {
  width: 100%;
  height: 14px;
  margin: 2px 0 1px;
  padding: 0 2px;
  border: 1px solid var(--input-line);
  border-radius: 3px;
  background: #fff;
}

.range input[type="range"] {
  appearance: none;
  width: 100%;
  height: 10px;
  background: linear-gradient(#48a9e6, #48a9e6) no-repeat 0 50% / 50% 2px, linear-gradient(#c9d0d0, #c9d0d0) no-repeat 0 50% / 100% 2px;
}

.range .third {
  background-size: 31% 2px, 100% 2px;
}

.range .full {
  background-size: 100% 2px;
}

.range input::-webkit-slider-thumb {
  appearance: none;
  width: 8px;
  height: 8px;
  border: 1px solid #69b4e2;
  border-radius: 50%;
  background: #fff;
}

.legend-row {
  display: flex;
  align-items: center;
  gap: 2px;
}

.legend-row .toggle {
  flex: 1;
  margin: 0;
}

.legend-row button {
  display: grid;
  place-items: center;
  width: 14px;
  height: 14px;
  border-radius: 3px;
}

.legend-row button:last-child {
  margin-right: 7px;
}

.legend-row .active {
  background: #dfeefa;
}

.legend-row svg {
  width: 8px;
  height: 8px;
}

/* Preview */
.preview {
  display: flex;
  flex-direction: column;
  padding: 5px 4px 7px 5px;
}

.preview-head {
  display: flex;
  align-items: center;
  gap: 4px;
  height: 12px;
  padding-right: 2px;
}

.preview-head h2 {
  color: var(--text);
  font-weight: 700;
}

.preview-head .segmented {
  font-size: 6px;
  font-weight: 900;
}

.preview-head .segmented button {
  width: 43px;
  height: 10px;
}

.preview-head .btn {
  height: 12px;
  padding: 0 4px;
  font-size: 6px;
  font-weight: 900;
}

.preview-head .suggestions {
  margin-left: auto;
}

.preview-head .dots {
  width: 15px;
}

.dots svg {
  width: 7px;
  height: 2px;
}

h3 {
  margin: 8px 0 4px;
  font-size: 8px;
  line-height: 10px;
  font-weight: 900;
  text-align: center;
  color: var(--ink);
}

.subtitle {
  margin-bottom: 9px;
  text-align: center;
}

.chart {
  flex: 1;
  display: grid;
  grid-template-columns: 1fr 38px;
  gap: 8px;
}

.map {
  position: relative;
  overflow: hidden;
  background: #a6daf5;
}

.map > svg {
  position: absolute;
  width: 100%;
  height: 100%;
}

.sea {
  fill: #a4d9f6;
}

.deep {
  fill: #8ccaf0;
  opacity: 0.5;
}

.land {
  fill: #f3f3f1;
}

.forest-area {
  fill: #cbe8dc;
}

.desert {
  fill: #f4efdd;
}

.borders {
  fill: none;
  stroke: #dfb9c6;
  stroke-width: 0.6;
}

.map text {
  font-family: "Noto Sans", sans-serif;
  paint-order: stroke;
  stroke: rgba(255, 255, 255, 0.6);
  stroke-width: 1px;
}

.countries text {
  font-size: 5px;
  fill: #a67f9b;
  stroke: rgba(255, 255, 255, 0.2);
}

.waters text {
  font-size: 4px;
  font-style: italic;
  fill: #5d91b5;
  stroke: none;
}

.cities text {
  font-size: 6px;
  font-weight: 500;
  fill: #39393d;
}

.city-dots {
  stroke: #4a4a4e;
  stroke-width: 2px;
  stroke-linecap: round;
}

.history { fill: var(--teal); }
.attraction { fill: #f1cf73; }
.government { fill: #9b46b3; }
.museum { fill: #82d6a3; }
.stadium { fill: var(--green); }
.park { stroke: #9b3fb0; stroke-width: 1px; }

.zoom {
  position: absolute;
  top: 5px;
  left: 5px;
  border-radius: 2px;
  background: #fff;
}

.zoom button {
  display: block;
  width: 14px;
  height: 14px;
  font-size: 9px;
}

.zoom button + button {
  border-top: 1px solid #ddd;
}

.credit {
  position: absolute;
  right: 0;
  bottom: 0;
  padding: 0 2px;
  background: rgba(255, 255, 255, 0.8);
  font-size: 5px;
  line-height: 5px;
}

.credit a {
  color: #2b86b8;
  text-decoration: none;
}

.legend {
  font-size: 5px;
  line-height: 7px;
}

.legend b {
  font-size: 6px;
  font-weight: 900;
  color: var(--ink);
}

.legend li {
  display: flex;
  align-items: center;
  gap: 4px;
  font-weight: 700;
}

.legend i {
  flex: none;
  width: 5px;
  height: 5px;
  border-radius: 50%;
}

/* Chat launcher */
.chat {
  position: fixed;
  right: 20px;
  bottom: 15px;
  display: grid;
  place-items: center;
  width: 24px;
  height: 24px;
  border-radius: 50%;
  background: var(--green);
  box-shadow: 0 1px 5px rgba(0, 30, 20, 0.2);
}

.chat svg {
  width: 12px;
  height: 12px;
}

.badge {
  position: absolute;
  top: -4px;
  right: -4px;
  width: 8px;
  height: 8px;
  border-radius: 50%;
  background: #e25745;
}
```
